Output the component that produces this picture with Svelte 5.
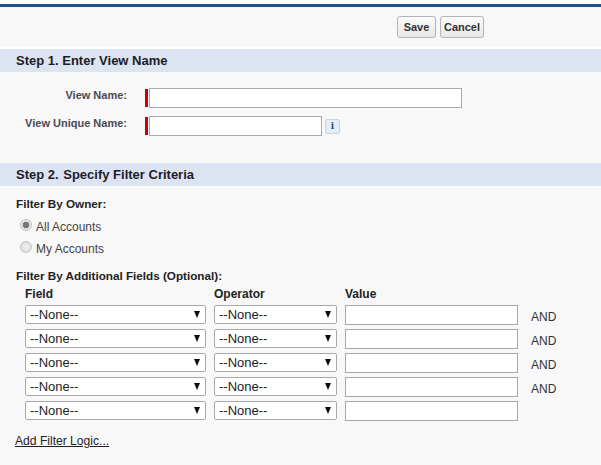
<script>
  const rows = [true, true, true, true, false];
</script>

<div class="page">
  <div class="topbar"></div>
  <div class="actions">
    <button class="btn save">Save</button>
    <button class="btn cancel">Cancel</button>
  </div>
  <h2 class="band first">Step 1. Enter View Name</h2>
  <div class="names">
    <div class="name-row one">
      <span class="name-label">View Name:</span>
      <span class="req"></span>
      <input class="text wide" type="text" />
    </div>
    <div class="name-row two">
      <span class="name-label">View Unique Name:</span>
      <span class="req"></span>
      <input class="text narrow" type="text" />
      <span class="info">i</span>
    </div>
  </div>
  <h2 class="band second">Step 2. <span class="step-title">Specify Filter Criteria</span></h2>
  <div class="filters">
    <div class="sub owner">Filter By Owner:</div>
    <div class="radio r1"><span class="dot on"></span><span>All Accounts</span></div>
    <div class="radio r2"><span class="dot"></span><span>My Accounts</span></div>
    <div class="sub extra">Filter By Additional Fields (Optional):</div>
    <div class="grid">
      <div class="col-head">Field</div>
      <div class="col-head">Operator</div>
      <div class="col-head">Value</div>
      <div></div>
      {#each rows as hasAnd}
        <div class="sel"><span>--None--</span><i></i></div>
        <div class="sel"><span>--None--</span><i></i></div>
        <input class="text value" type="text" />
        <div class="and">{hasAnd ? 'AND' : ''}</div>
      {/each}
    </div>
    <a class="logic" href="#logic">Add Filter Logic...</a>
  </div>
</div>

<style>
  :global(body) {
    margin: 0;
    background: #f8f8f8;
  }
  .page {
    width: 601px;
    height: 465px;
    overflow: hidden;
    background: #f8f8f8;
    font-family: "Liberation Sans", Arial, sans-serif;
    font-size: 12px;
    color: #222;
    box-sizing: border-box;
    padding-top: 4px;
    background-image: linear-gradient(#fff 4px, transparent 4px);
  }
  .topbar {
    height: 3px;
    background: #23508f;
  }
  .actions {
    display: flex;
    gap: 4px;
    padding: 9px 0 0 397px;
    box-sizing: border-box;
    height: 40px;
  }
  .btn {
    height: 22px;
    padding: 0;
    border: 1px solid #b5b5b5;
    border-radius: 3px;
    background: linear-gradient(#fbfbfb, #e8e8e8);
    font: bold 11px "Liberation Sans", Arial, sans-serif;
    color: #333;
  }
  .save { width: 39px; }
  .cancel { width: 44px; }
  .band {
    margin: 0;
    height: 25px;
    box-sizing: border-box;
    padding-left: 16px;
    background: #dce4f2;
    border-top: 2px solid #fff;
    font-size: 13px;
    font-weight: bold;
    line-height: 23px;
    color: #1c1c28;
  }
  .band.second {
    height: 23px;
    border-top: 0;
    margin-top: 27px;
  }
  .step-title {
    margin-left: 1px;
  }
  .names {
    padding-top: 16px;
  }
  .name-row {
    display: flex;
    align-items: flex-start;
    height: 20px;
  }
  .name-row.two {
    margin-top: 8px;
  }
  .name-label {
    width: 127px;
    text-align: right;
    font-size: 11px;
    font-weight: bold;
    color: #4a4a56;
    line-height: 14px;
  }
  .req {
    width: 3px;
    height: 18px;
    margin: 1px 1px 0 18px;
    background: #c00;
  }
  .text {
    display: block;
    box-sizing: border-box;
    height: 20px;
    margin: 0;
    padding: 0;
    border: 1px solid #a9a9a9;
    background: #fff;
    border-radius: 0;
    outline: none;
  }
  .wide { width: 313px; }
  .narrow { width: 173px; }
  .info {
    width: 15px;
    height: 15px;
    box-sizing: border-box;
    margin: 3px 0 0 3px;
    border: 1px solid #c9d4e0;
    border-radius: 2px;
    background: #e4edf6;
    color: #1f4f85;
    font: bold 9px/13px "DejaVu Serif", serif;
    text-align: center;
  }
  .filters {
    padding-left: 16px;
  }
  .sub {
    font-size: 11.7px;
    font-weight: bold;
    color: #222;
    line-height: 14px;
  }
  .owner { margin-top: 11px; }
  .radio {
    display: flex;
    align-items: center;
    gap: 4px;
    margin-left: 4px;
    height: 16px;
    color: #444;
    font-size: 12px;
  }
  .r1 { margin-top: 8px; }
  .r2 { margin-top: 6px; }
  .dot {
    width: 12px;
    height: 12px;
    box-sizing: border-box;
    border: 1px solid #c2c2c2;
    border-radius: 50%;
    background: radial-gradient(#f0f0f0, #d8d8d8);
    position: relative;
    top: -2px;
  }
  .dot.on {
    background: radial-gradient(#777 0 3px, #e4e4e4 3.6px);
  }
  .extra { margin-top: 12px; }
  .grid {
    display: grid;
    grid-template-columns: 181px 123px 173px auto;
    column-gap: 8px;
    row-gap: 4px;
    margin-left: 9px;
    justify-content: start;
    align-items: start;
  }
  .col-head {
    font-size: 12px;
    font-weight: bold;
    color: #222;
    line-height: 14px;
    margin-top: 4px;
  }
  .sel {
    display: flex;
    align-items: center;
    justify-content: space-between;
    box-sizing: border-box;
    height: 19px;
    padding: 0 5px 0 4px;
    border: 1px solid #a9a9a9;
    border-radius: 2px;
    background: #fff;
    color: #222;
    font-size: 13px;
  }
  .sel i {
    width: 0;
    height: 0;
    border-left: 3.5px solid transparent;
    border-right: 3.5px solid transparent;
    border-top: 7px solid #111;
    margin-top: -1px;
  }
  .value { width: 173px; }
  .and {
    margin-left: 5px;
    font-size: 12px;
    color: #333;
    line-height: 14px;
    padding-top: 5px;
    height: 20px;
    box-sizing: border-box;
  }
  .logic {
    display: inline-block;
    margin-top: 13px;
    margin-left: -1px;
    color: #222;
    font-size: 12.1px;
    line-height: 14px;
    text-decoration: underline;
  }
</style>
